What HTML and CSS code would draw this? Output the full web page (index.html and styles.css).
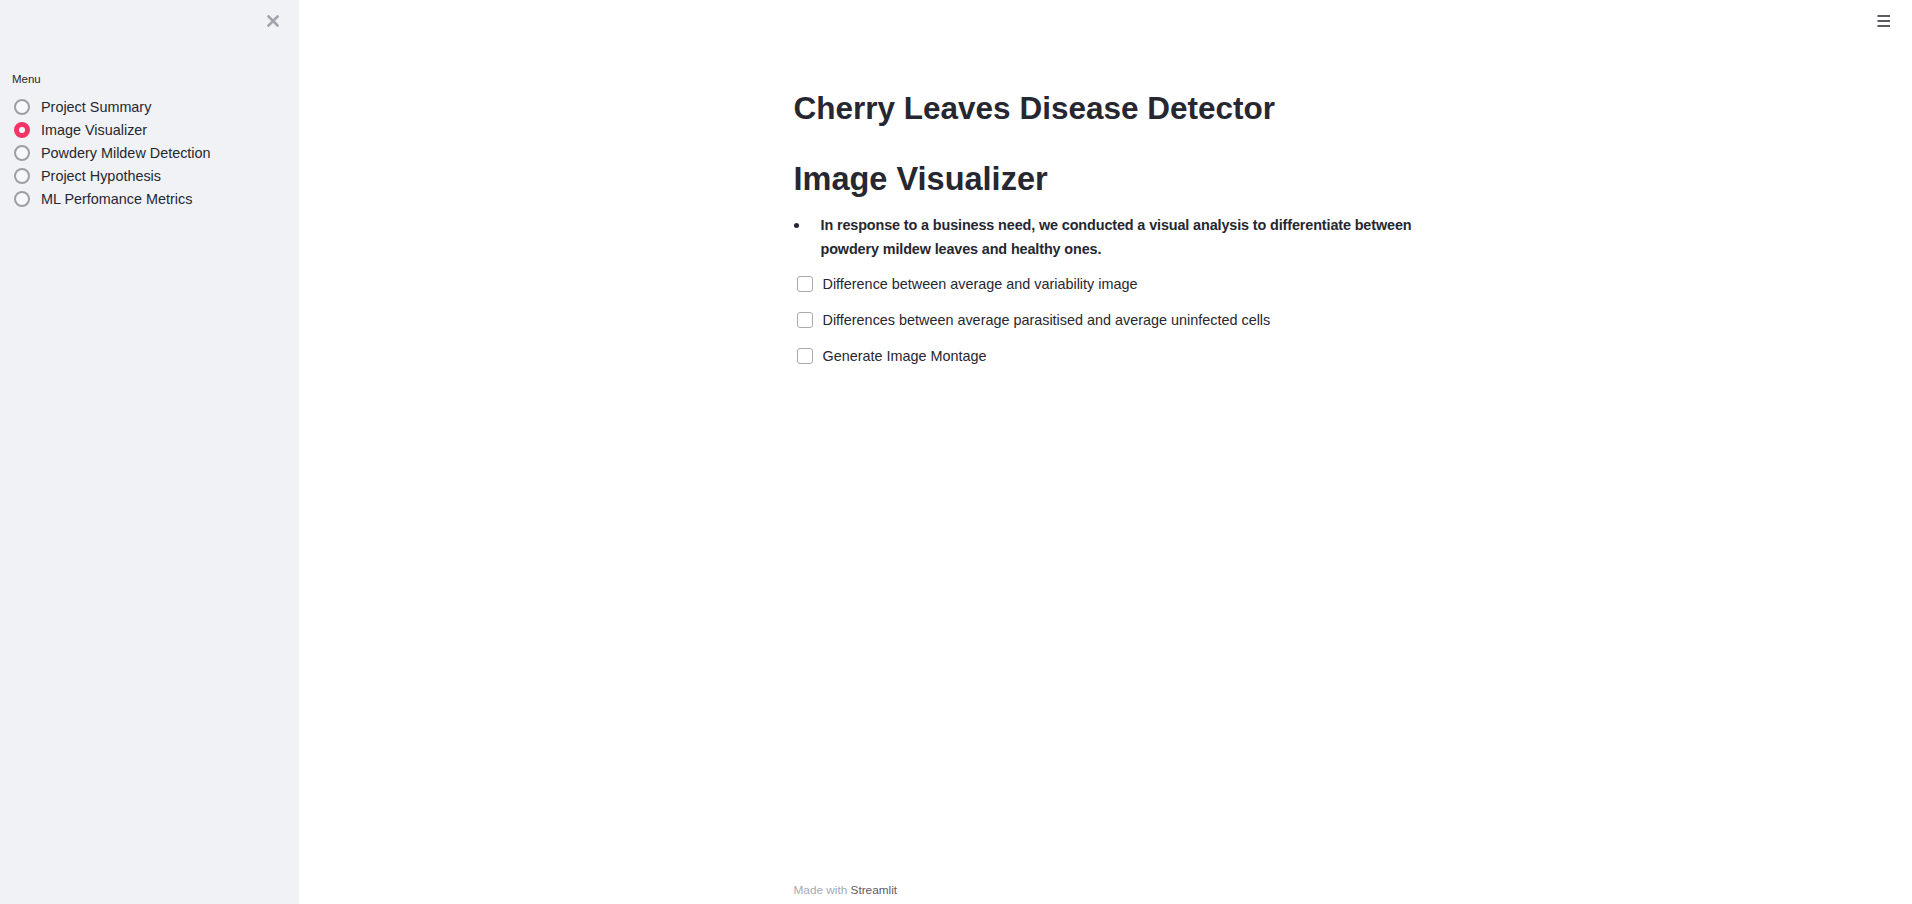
FILE: index.html
```html
<!DOCTYPE html>
<html lang="en">
<head>
<meta charset="utf-8">
<title>Cherry Leaves Disease Detector</title>
<link rel="stylesheet" href="styles.css">
</head>
<body>
<div class="app">
  <aside class="sidebar">
    <div class="sb-top">
      <button class="close-btn" aria-label="Close sidebar">
        <svg width="12" height="12" viewBox="0 0 12 12"><path d="M1.5 1.5 L10.5 10.5 M10.5 1.5 L1.5 10.5" stroke="#a3a3ab" stroke-width="2.6" stroke-linecap="square"/></svg>
      </button>
    </div>
    <div class="sb-body">
      <div class="menu-label">Menu</div>
      <div class="radio-list">
        <div class="radio-item"><span class="radio"></span><span>Project Summary</span></div>
        <div class="radio-item"><span class="radio checked"></span><span>Image Visualizer</span></div>
        <div class="radio-item"><span class="radio"></span><span>Powdery Mildew Detection</span></div>
        <div class="radio-item"><span class="radio"></span><span>Project Hypothesis</span></div>
        <div class="radio-item"><span class="radio"></span><span>ML Perfomance Metrics</span></div>
      </div>
    </div>
  </aside>
  <main class="main">
    <button class="menu-btn" aria-label="Main menu">
      <svg width="14" height="12" viewBox="0 0 14 12"><path d="M0.5 1 H13 M0.5 6 H13 M0.5 11 H13" stroke="#262730" stroke-width="1.4"/></svg>
    </button>
    <div class="block">
      <h1 class="title">Cherry Leaves Disease Detector</h1>
      <h2 class="header">Image Visualizer</h2>
      <ul class="bullets">
        <li><span class="dot"></span><span class="li-text">In response to a business need, we conducted a visual analysis to differentiate between powdery mildew leaves and healthy ones.</span></li>
      </ul>
      <div class="checks">
        <label class="check"><span class="box"></span><span>Difference between average and variability image</span></label>
        <label class="check"><span class="box"></span><span>Differences between average parasitised and average uninfected cells</span></label>
        <label class="check"><span class="box"></span><span>Generate Image Montage</span></label>
      </div>
    </div>
    <footer class="footer"><span class="made">Made with </span><span class="brand">Streamlit</span></footer>
  </main>
</div>
</body>
</html>
```
FILE: styles.css
```css
* { box-sizing: border-box; }
html, body { margin: 0; padding: 0; height: 100%; }
body {
  font-family: "Liberation Sans", Arial, sans-serif;
  color: #262730;
  background: #ffffff;
}
.app { display: flex; height: 904px; }

.sidebar {
  width: 299px;
  flex: none;
  background: #f0f2f6;
}
.sb-top {
  height: 43px;
  display: flex;
  justify-content: flex-end;
  align-items: center;
  padding-right: 20px;
  padding-bottom: 2px;
}
.close-btn {
  border: 0;
  background: none;
  padding: 0;
  width: 12px;
  height: 12px;
  display: flex;
}
.sb-body { padding: 28px 12px 0 12px; }
.menu-label {
  font-size: 11.5px;
  line-height: 16px;
  color: #262730;
}
.radio-list { margin-top: 8px; }
.radio-item {
  display: flex;
  align-items: center;
  height: 23.2px;
  font-size: 14.4px;
  color: #262730;
}
.radio {
  width: 16px;
  height: 16px;
  border-radius: 50%;
  border: 2px solid #9e9ea3;
  background: #f7f8fb;
  margin-left: 2px;
  margin-right: 11px;
  flex: none;
}
.radio.checked {
  border: 5px solid #f63366;
  background: #ffffff;
}

.main {
  flex: 1;
  position: relative;
  display: flex;
  flex-direction: column;
}
.menu-btn {
  position: absolute;
  top: 15px;
  right: 21px;
  border: 0;
  background: none;
  padding: 0;
  display: flex;
}
.block {
  width: 624px;
  margin: 0 auto;
  padding-top: 89px;
  flex: 1;
}
.title, .header {
  margin: 0;
  font-size: 31.5px;
  line-height: 38px;
  font-weight: 700;
  color: #262730;
}
.header { margin-top: 33px; font-size: 32.5px; }
.bullets {
  list-style: none;
  margin: 15px 0 5px 0;
  padding: 0;
  font-size: 14.4px;
  line-height: 24px;
  font-weight: 700;
  letter-spacing: -0.12px;
}
.bullets li { display: flex; align-items: flex-start; }
.dot {
  flex: none;
  width: 5px;
  height: 5px;
  border-radius: 50%;
  background: #262730;
  margin: 10px 22px 0 0;
}
.li-text { flex: 1; }
.checks { display: flex; flex-direction: column; }
.check {
  display: flex;
  align-items: center;
  height: 36px;
  font-size: 14.4px;
  color: #262730;
}
.box {
  width: 16px;
  height: 16px;
  border: 1px solid #a9a9b0;
  border-radius: 3px;
  background: #ffffff;
  margin-left: 3px;
  margin-right: 10px;
  flex: none;
}
.footer {
  width: 624px;
  margin: 0 auto;
  font-size: 11.8px;
  line-height: 16px;
  padding-bottom: 6px;
}
.made { color: #a7aab5; }
.brand { color: #5a5d68; }
```
